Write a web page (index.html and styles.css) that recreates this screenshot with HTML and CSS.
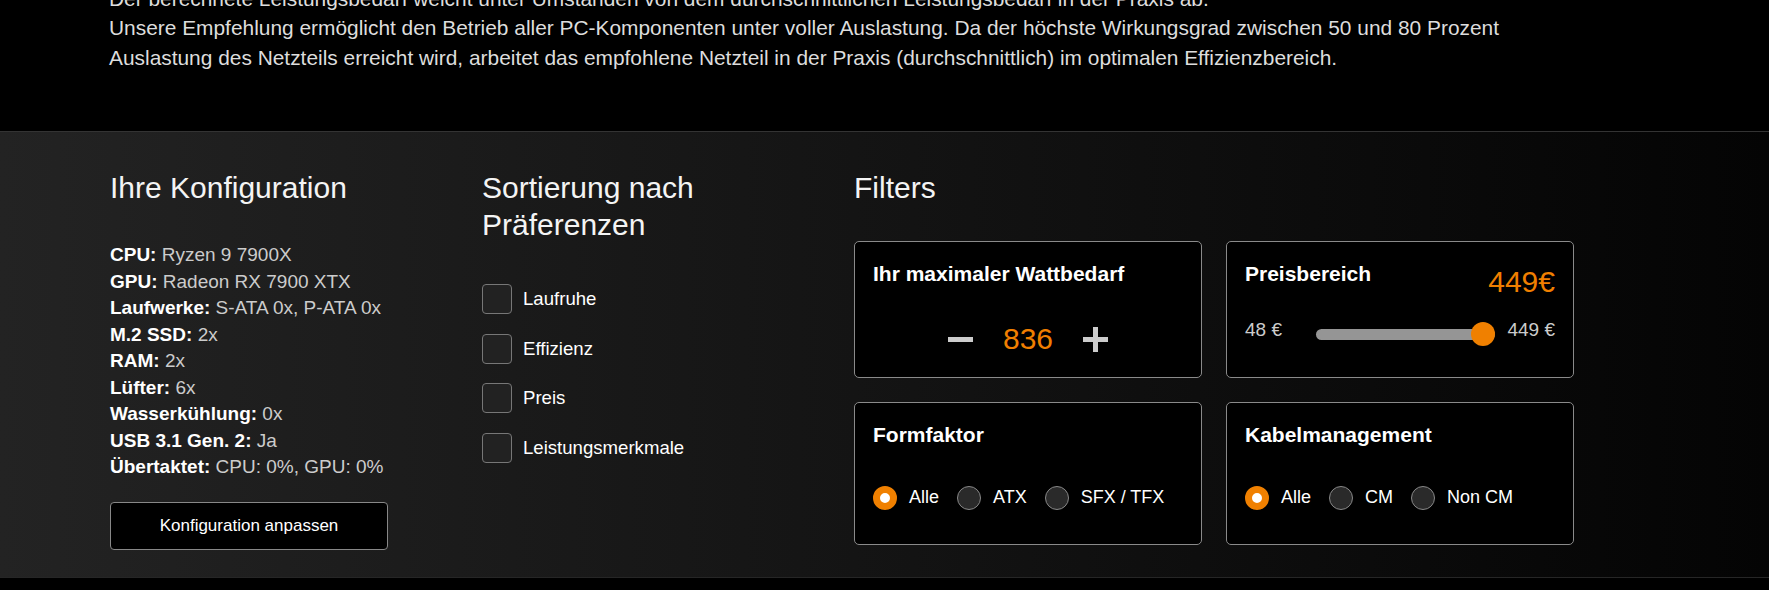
FILE: index.html
```html
<!DOCTYPE html>
<html>
<head>
	<title>Netzteil-Empfehlung</title>
	<link rel="stylesheet" href="styles.css">
</head>
<body>
	<!-- hint text above the filter panel -->
	<div class="intro">
		<p>Der berechnete Leistungsbedarf weicht unter Umständen von dem durchschnittlichen Leistungsbedarf in der Praxis ab.<br>Unsere Empfehlung ermöglicht den Betrieb aller PC-Komponenten unter voller Auslastung. Da der höchste Wirkungsgrad zwischen 50 und 80 Prozent Auslastung des Netzteils erreicht wird, arbeitet das empfohlene Netzteil in der Praxis (durchschnittlich) im optimalen Effizienzbereich.</p>
	</div>

	<div class="panel">
		<div class="panel-inner">
			<!-- configuration summary -->
			<div class="col">
				<h2>Ihre Konfiguration</h2>
				<ul class="config">
					<li><b>CPU:</b> Ryzen 9 7900X</li>
					<li><b>GPU:</b> Radeon RX 7900 XTX</li>
					<li><b>Laufwerke:</b> S-ATA 0x, P-ATA 0x</li>
					<li><b>M.2 SSD:</b> 2x</li>
					<li><b>RAM:</b> 2x</li>
					<li><b>Lüfter:</b> 6x</li>
					<li><b>Wasserkühlung:</b> 0x</li>
					<li><b>USB 3.1 Gen. 2:</b> Ja</li>
					<li><b>Übertaktet:</b> CPU: 0%, GPU: 0%</li>
				</ul>
				<button class="btn">Konfiguration anpassen</button>
			</div>

			<!-- sorting checkboxes -->
			<div class="col">
				<h2>Sortierung nach Präferenzen</h2>
				<div class="checks">
					<label class="check"><span class="box"></span>Laufruhe</label>
					<label class="check"><span class="box"></span>Effizienz</label>
					<label class="check"><span class="box"></span>Preis</label>
					<label class="check"><span class="box"></span>Leistungsmerkmale</label>
				</div>
			</div>

			<!-- filter cards -->
			<div class="col">
				<h2>Filters</h2>
				<div class="cards">
					<div class="card">
						<h3>Ihr maximaler Wattbedarf</h3>
						<div class="counter">
							<svg class="step" width="25" height="25" viewBox="0 0 25 25"><rect x="0" y="10" width="25" height="5"/></svg>
							<span class="value">836</span>
							<svg class="step" width="25" height="25" viewBox="0 0 25 25"><rect x="0" y="10" width="25" height="5"/><rect x="10" y="0" width="5" height="25"/></svg>
						</div>
					</div>

					<div class="card">
						<div class="card-head">
							<h3>Preisbereich</h3>
							<span class="price">449€</span>
						</div>
						<div class="range">
							<span>48 €</span>
							<div class="track"><span class="thumb"></span></div>
							<span>449 €</span>
						</div>
					</div>

					<div class="card">
						<h3>Formfaktor</h3>
						<div class="radios">
							<span class="radio checked"></span><span class="radio-label">Alle</span>
							<span class="radio"></span><span class="radio-label">ATX</span>
							<span class="radio"></span><span class="radio-label">SFX / TFX</span>
						</div>
					</div>

					<div class="card">
						<h3>Kabelmanagement</h3>
						<div class="radios">
							<span class="radio checked"></span><span class="radio-label">Alle</span>
							<span class="radio"></span><span class="radio-label">CM</span>
							<span class="radio"></span><span class="radio-label">Non CM</span>
						</div>
					</div>
				</div>
			</div>
		</div>
	</div>
</body>
</html>
```

FILE: styles.css
```css
body{
	margin: 0;
	background-color: #000;
	color: #fff;
	font-family: "Liberation Sans", Arial, sans-serif;
}
.intro{
	height: 131px;
	overflow: hidden;
	padding-left: 109px;
}
.intro p{
	width: 1464px;
	margin: -16px 0 0;
	font-size: 20.9px;
	line-height: 29.4px;
	color: #ddd;
}
.panel{
	border-top: 1px solid #333;
	border-bottom: 1px solid #262626;
	background: linear-gradient(to right, #232323, #040404);
	padding: 37px 0 27px 110px;
}
.panel-inner{
	display: grid;
	grid-template-columns: 348px 348px 720px;
	column-gap: 24px;
}
h2{
	margin: 0;
	font-size: 30px;
	line-height: 37px;
	font-weight: normal;
	color: #f4f4f4;
}
h3{
	margin: 0;
	font-size: 21px;
	line-height: 29px;
	font-weight: bold;
}
.config{
	list-style: none;
	margin: 36px 0 0;
	padding: 0;
	font-size: 19px;
	line-height: 26.5px;
	color: #ccc;
}
.config b{
	color: #fff;
}
.btn{
	display: block;
	margin-top: 21px;
	width: 278px;
	height: 48px;
	border: 1px solid #888;
	border-radius: 4px;
	background-color: #000;
	color: #fff;
	font-family: inherit;
	font-size: 17px;
}
.checks{
	margin-top: 41px;
	display: flex;
	flex-direction: column;
	gap: 19.5px;
}
.check{
	display: flex;
	align-items: center;
	gap: 11px;
	font-size: 18.6px;
}
.box{
	width: 30px;
	height: 30px;
	box-sizing: border-box;
	border: 1px solid #777;
	border-radius: 4px;
	background-color: #222;
}
.cards{
	margin-top: 35px;
	display: grid;
	grid-template-columns: 1fr 1fr;
	gap: 24px;
}
.card{
	border: 1px solid #8a8a8a;
	border-radius: 5px;
	background-color: #000;
	padding: 17px 18px;
}
.counter{
	margin-top: 30px;
	height: 42px;
	display: flex;
	justify-content: center;
	align-items: center;
	gap: 30px;
}
.step{
	fill: #ccc;
}
.value{
	font-size: 30px;
	line-height: 42px;
	color: #f07f00;
}
.card-head{
	display: flex;
	justify-content: space-between;
	align-items: flex-start;
}
.price{
	font-size: 30px;
	line-height: 46px;
	color: #f07f00;
}
.range{
	margin-top: 12px;
	display: flex;
	align-items: center;
	font-size: 19px;
	line-height: 26.6px;
	color: #ccc;
}
.track{
	flex: 1;
	height: 11px;
	margin: 8px 12px 0 34px;
	border-radius: 6px;
	background-color: #959595;
	display: flex;
	justify-content: flex-end;
	align-items: center;
}
.thumb{
	flex-shrink: 0;
	width: 24px;
	height: 24px;
	border-radius: 50%;
	background-color: #f08000;
}
.radios{
	margin: 36px 0 17px;
	display: flex;
	align-items: center;
	font-size: 18px;
	line-height: 25px;
}
.radio{
	width: 24px;
	height: 24px;
	box-sizing: border-box;
	border: 1px solid #888;
	border-radius: 50%;
	background-color: #2a2a2a;
	margin-left: 18px;
}
.radio:first-child{
	margin-left: 0;
}
.radio.checked{
	border: 7px solid #f08000;
	background-color: #fff;
}
.radio-label{
	margin-left: 12px;
}
```
